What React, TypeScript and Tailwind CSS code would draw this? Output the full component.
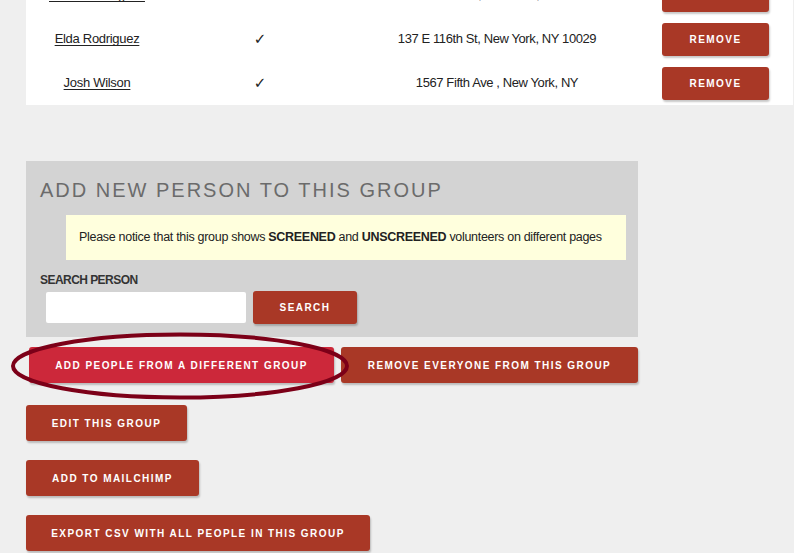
const people = [
  { name: 'Lucia Dominguez', address: '2130 Third Ave, New York, NY 10035' },
  { name: 'Elda Rodriguez', address: '137 E 116th St, New York, NY 10029' },
  { name: 'Josh Wilson', address: '1567 Fifth Ave , New York, NY' },
]

const btn =
  'flex items-center justify-center rounded-[3px] bg-[#a93826] text-white text-[10px] font-bold tracking-[1.45px] uppercase shadow-[1px_2px_2px_rgba(0,0,0,0.22)]'

export default function App() {
  return (
    <div className="h-[553px] overflow-hidden bg-[#efefef] font-['Liberation_Sans',Arial,sans-serif]">
      {/* Members table */}
      <div className="ml-[26px] mt-[-27px] w-[767px] bg-white">
        {people.map((p) => (
          <div key={p.name} className="grid h-[44px] grid-cols-[142px_184px_290px_127px] items-center text-[13px] text-[#222]">
            <div className="text-center">
              <a className="underline underline-offset-2 tracking-[-0.3px]">{p.name}</a>
            </div>
            <div className="text-center font-['DejaVu_Sans',sans-serif] text-[15px] font-bold">✓</div>
            <div className="text-center tracking-[-0.4px]">{p.address}</div>
            <div className="flex justify-end">
              <button className={btn + ' h-[33px] w-[107px]'}>Remove</button>
            </div>
          </div>
        ))}
      </div>

      {/* Add person panel */}
      <div className="ml-[26px] mt-[56px] w-[612px] bg-[#d3d3d3] pb-[13px] pt-[15px]">
        <h2 className="pl-[14px] text-[20px] leading-[28px] tracking-[2px] text-[#6b6b6b] uppercase">
          Add new person to this group
        </h2>
        <div className="ml-[40px] mt-[11px] flex h-[45px] w-[560px] items-center bg-[#ffffdd] pl-[13px] text-[12.5px] text-[#222] tracking-[-0.3px] whitespace-nowrap">
          <span>
            Please notice that this group shows <b>SCREENED</b> and <b>UNSCREENED</b> volunteers on different pages
          </span>
        </div>
        <div className="mt-[12px] pl-[14px] text-[12px] font-bold leading-[16px] tracking-[-0.55px] text-[#333]">
          SEARCH PERSON
        </div>
        <div className="mt-[3px] flex items-center">
          <input className="ml-[20px] h-[31px] w-[200px] rounded-[2px] bg-white outline-none" />
          <button className={btn + ' ml-[7px] h-[33px] w-[104px]'}>Search</button>
        </div>
      </div>

      {/* Group actions */}
      <div className="relative mt-[10px] flex">
        <button className={btn + ' ml-[29px] h-[36px] w-[305px] bg-[#cc283a]'}>Add people from a different group</button>
        <button className={btn + ' ml-[7px] h-[36px] w-[297px]'}>Remove everyone from this group</button>
        <svg className="absolute left-[10px] top-[-15px]" width="342" height="68" viewBox="0 0 342 68">
          <ellipse cx="170" cy="34" rx="167" ry="31.5" fill="none" stroke="#7c0018" strokeWidth="4" />
        </svg>
      </div>
      <button className={btn + ' ml-[26px] mt-[22px] h-[36px] w-[161px]'}>Edit this group</button>
      <button className={btn + ' ml-[26px] mt-[19px] h-[36px] w-[173px]'}>Add to mailchimp</button>
      <button className={btn + ' ml-[26px] mt-[19px] h-[36px] w-[344px]'}>Export csv with all people in this group</button>
    </div>
  )
}
